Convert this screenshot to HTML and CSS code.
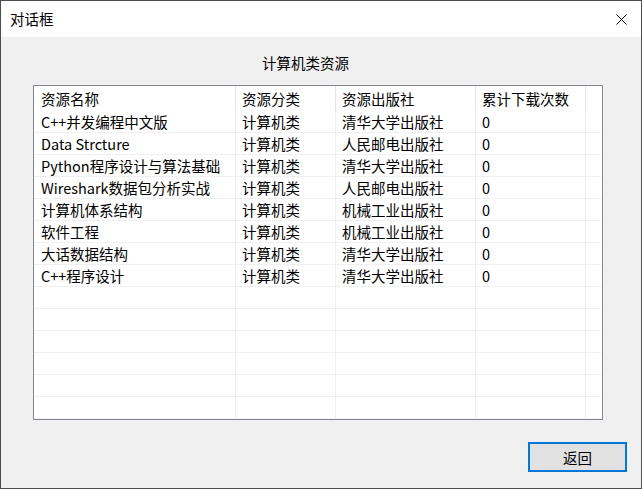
FILE: index.html
```html
<!DOCTYPE html>
<html lang="zh-CN">
<head>
<meta charset="utf-8">
<title>对话框</title>
<link rel="stylesheet" href="styles.css">
</head>
<body>
<div class="window">
  <div class="titlebar">
    <span class="title">对话框</span>
    <span class="close">
      <svg width="11" height="11" viewBox="0 0 11 11"><path d="M0.5 0.5 L10.5 10.5 M10.5 0.5 L0.5 10.5" stroke="#000" stroke-width="1" fill="none"/></svg>
    </span>
  </div>
  <div class="content">
    <div class="heading">计算机类资源</div>
    <div class="list">
      <div class="grid">
        <div class="hcell c1">资源名称</div><div class="hcell">资源分类</div><div class="hcell">资源出版社</div><div class="hcell">累计下载次数</div><div class="hcell last"></div>

        <div class="cell c1">C++并发编程中文版</div><div class="cell">计算机类</div><div class="cell">清华大学出版社</div><div class="cell">0</div><div class="cell last"></div>
        <div class="cell c1">Data Strcture</div><div class="cell">计算机类</div><div class="cell">人民邮电出版社</div><div class="cell">0</div><div class="cell last"></div>
        <div class="cell c1">Python程序设计与算法基础</div><div class="cell">计算机类</div><div class="cell">清华大学出版社</div><div class="cell">0</div><div class="cell last"></div>
        <div class="cell c1">Wireshark数据包分析实战</div><div class="cell">计算机类</div><div class="cell">人民邮电出版社</div><div class="cell">0</div><div class="cell last"></div>
        <div class="cell c1">计算机体系结构</div><div class="cell">计算机类</div><div class="cell">机械工业出版社</div><div class="cell">0</div><div class="cell last"></div>
        <div class="cell c1">软件工程</div><div class="cell">计算机类</div><div class="cell">机械工业出版社</div><div class="cell">0</div><div class="cell last"></div>
        <div class="cell c1">大话数据结构</div><div class="cell">计算机类</div><div class="cell">清华大学出版社</div><div class="cell">0</div><div class="cell last"></div>
        <div class="cell c1">C++程序设计</div><div class="cell">计算机类</div><div class="cell">清华大学出版社</div><div class="cell">0</div><div class="cell last"></div>

        <div class="cell c1"></div><div class="cell"></div><div class="cell"></div><div class="cell"></div><div class="cell last"></div>
        <div class="cell c1"></div><div class="cell"></div><div class="cell"></div><div class="cell"></div><div class="cell last"></div>
        <div class="cell c1"></div><div class="cell"></div><div class="cell"></div><div class="cell"></div><div class="cell last"></div>
        <div class="cell c1"></div><div class="cell"></div><div class="cell"></div><div class="cell"></div><div class="cell last"></div>
        <div class="cell c1"></div><div class="cell"></div><div class="cell"></div><div class="cell"></div><div class="cell last"></div>
        <div class="cell c1"></div><div class="cell"></div><div class="cell"></div><div class="cell"></div><div class="cell last"></div>
      </div>
    </div>
    <div class="actions">
      <button class="btn">返回</button>
    </div>
  </div>
</div>
</body>
</html>
```
FILE: styles.css
```css
* { box-sizing: border-box; }
html, body { margin: 0; padding: 0; }
body {
  font-family: "Noto Sans CJK SC", "Noto Sans", sans-serif;
  font-size: 14.5px;
  color: #000;
  background: #fff;
}
.window {
  width: 642px;
  height: 489px;
  border: 1px solid #4d4d4d;
  display: flex;
  flex-direction: column;
  overflow: hidden;
}
.titlebar {
  height: 36px;
  flex: none;
  background: #fff;
  display: flex;
  align-items: center;
  justify-content: space-between;
  padding-left: 9px;
  padding-right: 14px;
}
.title { line-height: 20px; }
.close { display: flex; width: 11px; height: 11px; }
.content {
  flex: 1;
  background: #f0f0f0;
  display: flex;
  flex-direction: column;
  padding: 16px 14px 0 32px;
}
.heading {
  line-height: 20px;
  padding-left: 229px;
}
.list {
  margin-top: 12px;
  width: 570px;
  height: 335px;
  border: 1px solid #828790;
  background: #fff;
  overflow: hidden;
}
.grid {
  display: grid;
  grid-template-columns: 202px 100px 140px 110px 1fr;
}
.hcell {
  height: 25px;
  line-height: 25px;
  padding-left: 6px;
  border-right: 1px solid #e5e5e5;
  white-space: nowrap;
  overflow: hidden;
}
.hcell.c1 { padding-left: 7px; }
.hcell.last { border-right: none; }
.cell {
  height: 22px;
  line-height: 21px;
  padding-left: 6px;
  border-right: 1px solid #f0f0f0;
  border-bottom: 1px solid #f0f0f0;
  white-space: nowrap;
  overflow: hidden;
}
.cell.c1 { padding-left: 7px; }
.cell.last { border-right: none; margin-right: 1px; }
.actions {
  display: flex;
  justify-content: flex-end;
  margin-top: 22px;
}
.btn {
  width: 99px;
  height: 30px;
  border: 2px solid #0078d7;
  background: #e1e1e1;
  font-family: "Noto Sans CJK SC", sans-serif;
  font-size: 14.5px;
  color: #000;
  padding: 0;
}
```
